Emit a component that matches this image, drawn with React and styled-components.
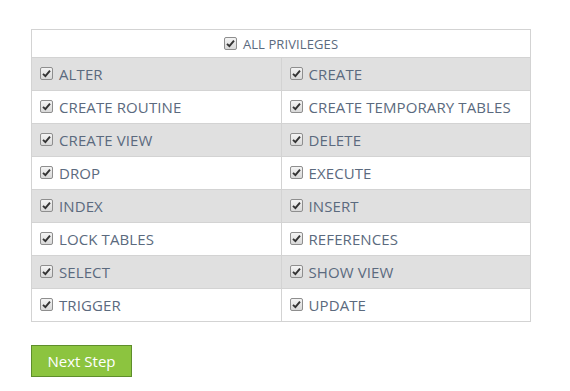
import React from 'react';
import styled, { createGlobalStyle } from 'styled-components';

const GlobalStyle = createGlobalStyle`
  body {
    margin: 0;
    background: #fff;
    font-family: "Open Sans", "Liberation Sans", sans-serif;
  }
`;

const Page = styled.div`
  padding: 29px 0 0 31px;
`;

const PrivTable = styled.table`
  border-collapse: collapse;
  border: 1px solid #d3d3d3;
  width: 500px;
  table-layout: fixed;
`;

const HeadCell = styled.td`
  height: 27px;
  padding: 0;
  text-align: center;
  font-size: 13px;
  color: #5b6a7e;
  border: 1px solid #d3d3d3;
`;

const Row = styled.tr`
  background: ${p => (p.$shaded ? '#e0e0e0' : '#fff')};
`;

const Cell = styled.td`
  height: 30px;
  padding: 0 0 2px 8px;
  border: 1px solid #d3d3d3;
  font-size: 15px;
  color: #5b6a7e;
  &:first-child {
    width: 241px;
  }
`;

const Label = styled.label`
  display: inline-flex;
  align-items: center;
  gap: 6px;
  letter-spacing: 0.1px;
`;

const Box = styled.span`
  width: 11px;
  height: 11px;
  border: 1px solid #8e8e8e;
  border-radius: 2px;
  background: linear-gradient(#f4f4f4, #d8d8d8);
  display: inline-flex;
  align-items: center;
  justify-content: center;
  flex-shrink: 0;
`;

const Button = styled.button`
  margin-top: 23px;
  width: 101px;
  height: 32px;
  background: #8cc43f;
  border: 1px solid #5e8e2b;
  color: #fff;
  font-family: "Open Sans", "Liberation Sans", sans-serif;
  font-size: 15px;
  padding: 0;
  cursor: pointer;
`;

const Check = () => (
  <Box>
    <svg width="9" height="9" viewBox="0 0 9 9">
      <path d="M1 4.8 L3.4 7.2 L8 1.6" fill="none" stroke="#333" strokeWidth="1.9" />
    </svg>
  </Box>
);

const pairs = [
  ['ALTER', 'CREATE'],
  ['CREATE ROUTINE', 'CREATE TEMPORARY TABLES'],
  ['CREATE VIEW', 'DELETE'],
  ['DROP', 'EXECUTE'],
  ['INDEX', 'INSERT'],
  ['LOCK TABLES', 'REFERENCES'],
  ['SELECT', 'SHOW VIEW'],
  ['TRIGGER', 'UPDATE'],
];

function App() {
  return (
    <Page>
      <GlobalStyle />
      <PrivTable>
        <tbody>
          <tr>
            <HeadCell colSpan={2}>
              <Label><Check />ALL PRIVILEGES</Label>
            </HeadCell>
          </tr>
          {pairs.map((pair, i) => (
            <Row key={pair[0]} $shaded={i % 2 === 0}>
              {pair.map(name => (
                <Cell key={name}>
                  <Label><Check />{name}</Label>
                </Cell>
              ))}
            </Row>
          ))}
        </tbody>
      </PrivTable>
      <Button>Next Step</Button>
    </Page>
  );
}

export default App;
